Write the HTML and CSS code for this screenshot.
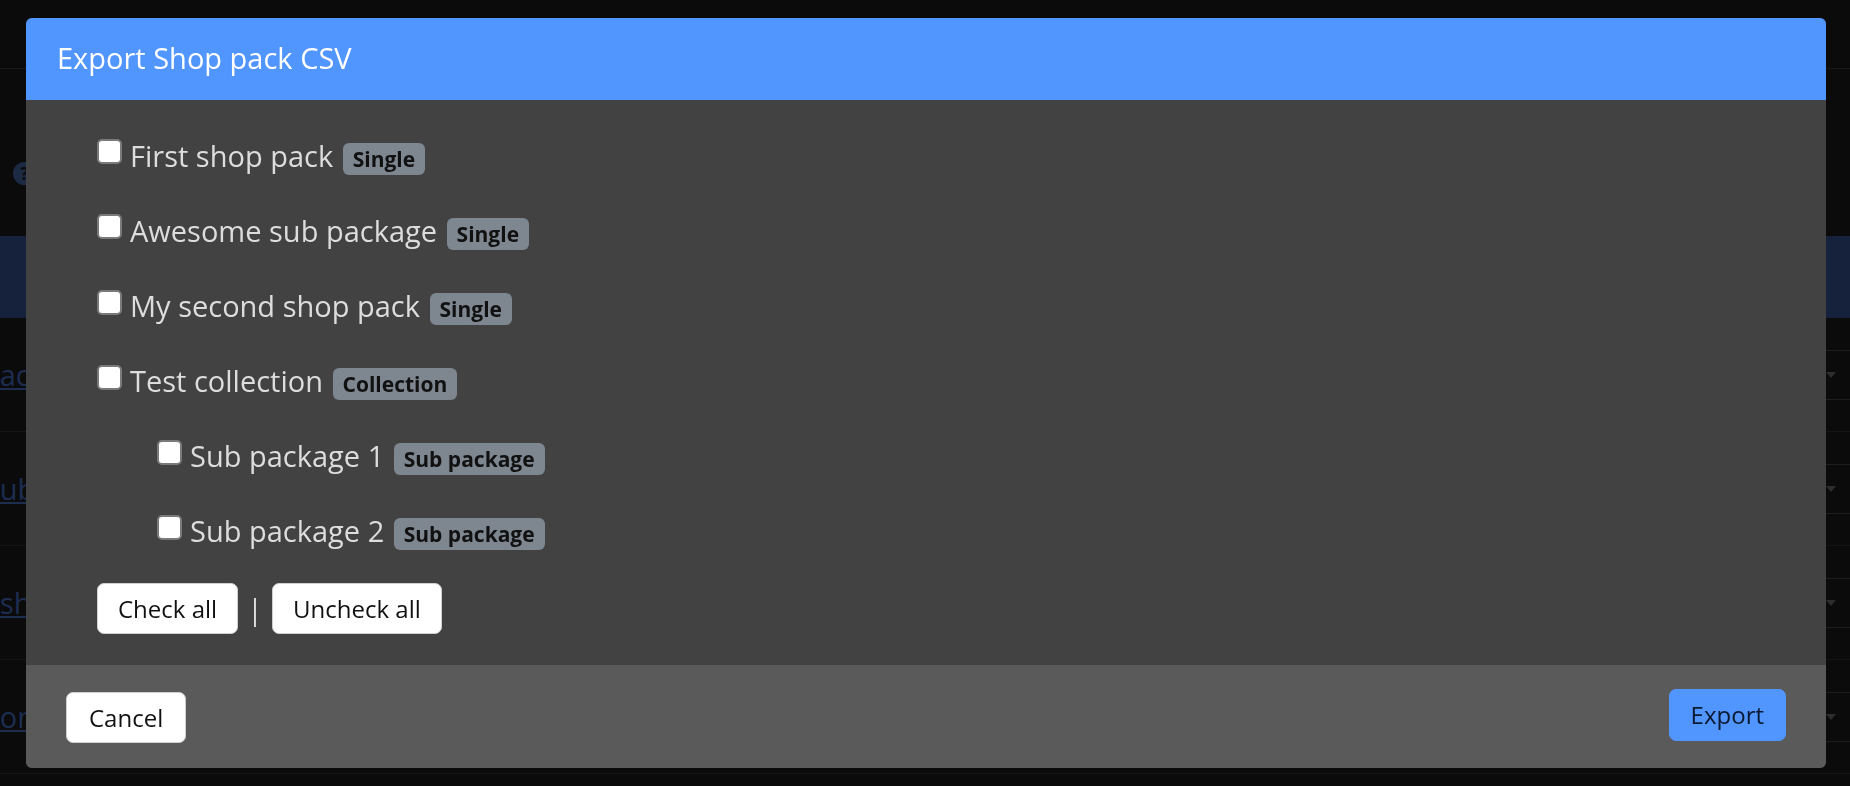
FILE: index.html
```html
<!DOCTYPE html>
<html lang="en">
<head>
<meta charset="utf-8">
<title>Shop packs</title>
<link rel="stylesheet" href="styles.css">
</head>
<body>
<div class="page">
  <nav class="navbar"></nav>
  <div class="page-head"><span class="help">?</span></div>
  <table class="packs">
    <thead>
      <tr><th class="col-name"></th><th class="col-mid"></th><th class="col-status"></th></tr>
    </thead>
    <tbody>
      <tr><td><a class="row-link cut-1" href="#">pack</a></td><td></td><td><div class="select"><span class="caret"></span></div></td></tr>
      <tr><td><a class="row-link cut-2" href="#">sub</a></td><td></td><td><div class="select"><span class="caret"></span></div></td></tr>
      <tr><td><a class="row-link" href="#">shop</a></td><td></td><td><div class="select"><span class="caret"></span></div></td></tr>
      <tr><td><a class="row-link cut-3" href="#">collection</a></td><td></td><td><div class="select"><span class="caret"></span></div></td></tr>
    </tbody>
  </table>
</div>

<div class="backdrop">
  <div class="modal">
    <div class="modal-header">
      <h5 class="modal-title">Export Shop pack CSV</h5>
    </div>
    <div class="modal-body">
      <div class="pack-list">
        <label class="pack"><input class="check" type="checkbox"><span class="pack-name">First shop pack <span class="badge">Single</span></span></label>
        <label class="pack"><input class="check" type="checkbox"><span class="pack-name">Awesome sub package <span class="badge">Single</span></span></label>
        <label class="pack"><input class="check" type="checkbox"><span class="pack-name">My second shop pack <span class="badge">Single</span></span></label>
        <label class="pack"><input class="check" type="checkbox"><span class="pack-name">Test collection <span class="badge">Collection</span></span></label>
        <label class="pack sub"><input class="check" type="checkbox"><span class="pack-name">Sub package 1 <span class="badge">Sub package</span></span></label>
        <label class="pack sub"><input class="check" type="checkbox"><span class="pack-name">Sub package 2 <span class="badge">Sub package</span></span></label>
      </div>
      <div class="bulk">
        <button class="btn btn-bulk" type="button">Check all</button>
        <span class="divider">|</span>
        <button class="btn btn-bulk" type="button">Uncheck all</button>
      </div>
    </div>
    <div class="modal-footer">
      <button class="btn btn-cancel" type="button">Cancel</button>
      <button class="btn btn-primary" type="button">Export</button>
    </div>
  </div>
</div>
</body>
</html>
```
FILE: styles.css
```css
html, body {
  margin: 0;
  padding: 0;
}

body {
  width: 1850px;
  height: 786px;
  overflow: hidden;
  background: #161616;
  font-family: "Open Sans", "Noto Sans", sans-serif;
}

/* ---------- page behind the dialog ---------- */
.navbar {
  height: 68px;
  border-bottom: 1px solid #333333;
}

.page-head {
  height: 167px;
  box-sizing: border-box;
  padding: 93px 0 0 13px;
}

.help {
  display: flex;
  align-items: center;
  justify-content: center;
  width: 23px;
  height: 23px;
  border-radius: 50%;
  background: #385488;
  color: #161616;
  font-size: 17px;
  font-weight: 700;
}

.packs {
  width: 100%;
  border-collapse: collapse;
  table-layout: fixed;
}

.packs th {
  height: 82px;
  padding: 0;
  background: #2c4478;
}

.packs .col-status {
  width: 320px;
}

.packs td {
  height: 113px;
  padding: 0;
  border-bottom: 1px solid #2a2a2a;
  vertical-align: middle;
}

.row-link {
  font-size: 29px;
  color: #3a5aa0;
  text-decoration: underline;
  white-space: nowrap;
}

.cut-1 { margin-left: -18px; }
.cut-2 { margin-left: -14px; }
.cut-3 { margin-left: -94px; }

.select {
  height: 50px;
  box-sizing: border-box;
  border-top: 1px solid #3a3a3a;
  border-bottom: 1px solid #3a3a3a;
  display: flex;
  align-items: center;
  justify-content: flex-end;
  padding-right: 14px;
}

.caret {
  width: 0;
  height: 0;
  border-left: 5px solid transparent;
  border-right: 5px solid transparent;
  border-top: 6px solid #5a5a5a;
}

/* ---------- dialog ---------- */
.backdrop {
  position: fixed;
  inset: 0;
  box-sizing: border-box;
  padding: 18px 0 0 2px;
  background: rgba(0, 0, 0, 0.5);
  display: flex;
  justify-content: center;
  align-items: flex-start;
}

.modal {
  width: 1800px;
  border-radius: 6px;
  overflow: hidden;
  background: #424242;
}

.modal-header {
  height: 82px;
  box-sizing: border-box;
  padding: 0 0 2px 31px;
  background: #5195ff;
  display: flex;
  align-items: center;
}

.modal-title {
  margin: 0;
  font-size: 29px;
  font-weight: 400;
  line-height: 1.362;
  color: #ffffff;
}

.modal-body {
  padding: 35px 71px 31px;
  color: #dddddd;
}

.pack-list {
  display: flex;
  flex-direction: column;
  gap: 35.2px;
}

.pack {
  display: flex;
  align-items: center;
  height: 40px;
  font-size: 29px;
}

.pack.sub {
  padding-left: 60px;
}

.check {
  appearance: none;
  -webkit-appearance: none;
  flex: none;
  width: 25px;
  height: 25px;
  margin: -6.5px 8px 0 0;
  box-sizing: border-box;
  border: 2px solid #7a7a7a;
  border-radius: 5px;
  background: #ffffff;
}

.pack-name {
  white-space: nowrap;
}

.badge {
  display: inline-block;
  margin-left: 2px;
  padding: 6px 10px 5px;
  border-radius: 6px;
  background: #7e8690;
  color: #111111;
  font-size: 21px;
  font-weight: 700;
  line-height: 1;
}

.bulk {
  display: flex;
  align-items: center;
  gap: 9px;
  margin-top: 32px;
}

.divider {
  font-size: 29px;
  line-height: 1;
  color: #dddddd;
}

.btn {
  height: 51px;
  padding: 0 21px;
  box-sizing: border-box;
  border: 1px solid #cfcfcf;
  border-radius: 7px;
  background: #ffffff;
  color: #111111;
  font-family: inherit;
  font-size: 24px;
  font-weight: 400;
}

.btn-bulk {
  padding: 0 20px;
}

.modal-footer {
  height: 103px;
  box-sizing: border-box;
  padding: 0 40px 0 40px;
  background: #5a5a5a;
  display: flex;
  align-items: center;
  justify-content: space-between;
}

.btn-cancel {
  margin-top: 3px;
  padding: 0 22px;
}

.btn-primary {
  height: 52px;
  margin-top: -3px;
  border-color: #5195ff;
  background: #5195ff;
  color: #0b1a33;
}
```
